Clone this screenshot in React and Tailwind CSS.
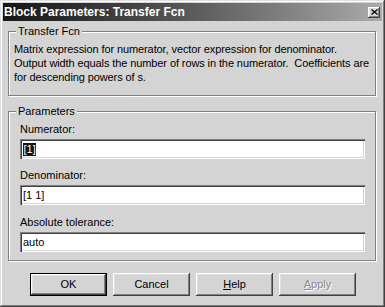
import React from 'react'

const raised = 'shadow-[inset_-1px_-1px_#404040,inset_1px_1px_#ffffff,inset_-2px_-2px_#808080,inset_2px_2px_#dfdfdf]'
const sunken = 'shadow-[inset_1px_1px_#808080,inset_2px_2px_#404040,inset_-1px_-1px_#ffffff,inset_-2px_-2px_#d4d4d4]'

function GroupBox({ label, className, children }) {
  return (
    <div className={`relative border border-[#808080] shadow-[1px_1px_0_#ffffff,inset_1px_1px_0_#ffffff] ${className}`}>
      <div className="absolute -top-[8px] left-[7px] px-[2px] leading-[14px] bg-[#d4d4d4]">{label}</div>
      {children}
    </div>
  )
}

function Field({ label, children, className = '' }) {
  return (
    <div className={className}>
      <div className="leading-[14px]">{label}</div>
      <div className={`mt-[3px] h-[20px] bg-white flex items-center pl-[3px] ${sunken}`}>{children}</div>
    </div>
  )
}

function Button({ children, primary, disabled }) {
  return (
    <div className={`w-[77px] h-[23px] flex items-center justify-center bg-[#d4d4d4] ${primary ? 'border border-black' : ''}`}>
      <div className={`w-full h-full flex items-center justify-center ${raised} ${disabled ? 'text-[#8a8a8a] [text-shadow:1px_1px_0_#ffffff]' : ''}`}>
        {children}
      </div>
    </div>
  )
}

export default function App() {
  return (
    <div className="w-[385px] h-[307px] bg-[#d4d4d4] p-[3px] flex flex-col text-[11px] text-black font-['Liberation_Sans',Arial,sans-serif] shadow-[inset_-1px_-1px_#404040,inset_1px_1px_#dfdfdf,inset_-2px_-2px_#808080,inset_2px_2px_#ffffff]">
      <div className="h-[18px] flex items-center bg-gradient-to-r from-[#161616] to-[#ababab] pl-[1px] pr-[2px]">
        <span className="text-white font-bold text-[12px] leading-none">Block Parameters: Transfer Fcn</span>
        <div className={`ml-auto w-[12px] h-[11px] bg-[#d4d4d4] flex items-center justify-center ${raised}`}>
          <svg width="7" height="6" viewBox="0 0 7 6">
            <path d="M0.5 0.5 L6.5 5.5 M6.5 0.5 L0.5 5.5" stroke="#000" strokeWidth="1.3" fill="none" />
          </svg>
        </div>
      </div>

      <div className="pl-[5px] pr-[6px]">
        <GroupBox label="Transfer Fcn" className="mt-[10px] h-[65px] pt-[10px] pl-[5px]">
          <div className="leading-[14px] whitespace-pre tracking-[-0.1px]">
            <div>Matrix expression for numerator, vector expression for denominator.</div>
            <div>Output width equals the number of rows in the numerator.  Coefficients are</div>
            <div>for descending powers of s.</div>
          </div>
        </GroupBox>

        <GroupBox label="Parameters" className="mt-[15px] h-[150px] pt-[10px] pl-[11px] pr-[10px]">
          <Field label="Numerator:">
            <span className="bg-[#141414] text-white leading-[13px] px-[0.5px]">[1]</span>
          </Field>
          <Field label="Denominator:" className="mt-[9px]">[1 1]</Field>
          <Field label="Absolute tolerance:" className="mt-[10px]">auto</Field>
        </GroupBox>
      </div>

      <div className="mt-[12px] pl-[27px] flex gap-[6px]">
        <Button primary>OK</Button>
        <Button>Cancel</Button>
        <Button><span><span className="underline">H</span>elp</span></Button>
        <Button disabled><span><span className="underline">A</span>pply</span></Button>
      </div>
    </div>
  )
}
